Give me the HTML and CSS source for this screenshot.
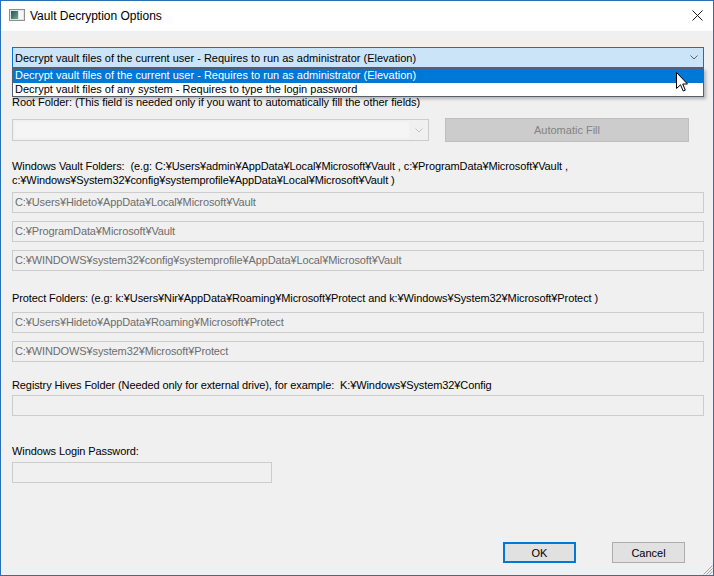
FILE: index.html
```html
<!DOCTYPE html>
<html lang="en">
<head>
  <meta charset="UTF-8">
  <title>Vault Decryption Options</title>
  <link rel="stylesheet" href="styles.css">
</head>
<body>
  <div class="window">
    <!-- Title bar -->
    <div class="titlebar">
      <svg class="app-icon" width="16" height="12" viewBox="0 0 16 12">
        <defs>
          <linearGradient id="pane" x1="0" y1="0" x2="1" y2="1">
            <stop offset="0" stop-color="#27525e"/>
            <stop offset="1" stop-color="#6da88a"/>
          </linearGradient>
        </defs>
        <rect x="0.5" y="0.5" width="15" height="11" fill="#e4e4e4" stroke="#8f8f8f"/>
        <rect x="2" y="2" width="7" height="8" fill="url(#pane)"/>
        <rect x="10" y="2" width="4" height="8" fill="#f7f7f7"/>
      </svg>
      <span class="title">Vault Decryption Options</span>
      <svg class="close" width="11" height="11" viewBox="0 0 11 11">
        <path d="M0.5 0.5 L10.5 10.5 M10.5 0.5 L0.5 10.5" stroke="#1a1a1a" stroke-width="1" fill="none"/>
      </svg>
    </div>

    <div class="client">
      <!-- Mode selector (open) -->
      <div class="combo combo-main">
        <span>Decrypt vault files of the current user - Requires to run as administrator (Elevation)</span>
        <svg width="8" height="5" viewBox="0 0 8 5"><path d="M0.5 0.5 L4 4 L7.5 0.5" stroke="#606060" fill="none"/></svg>
      </div>

      <ul class="droplist">
        <li class="selected">Decrypt vault files of the current user - Requires to run as administrator (Elevation)</li>
        <li>Decrypt vault files of any system - Requires to type the login password</li>
      </ul>

      <p class="label label-root">Root Folder: (This field is needed only if you want to automatically fill the other fields)</p>
      <div class="root-row">
        <div class="combo combo-root">
          <span class="combo-edit"></span>
          <svg width="8" height="5" viewBox="0 0 8 5"><path d="M0.5 0.5 L4 4 L7.5 0.5" stroke="#c2c2c2" fill="none"/></svg>
        </div>
        <div class="btn btn-disabled">Automatic Fill</div>
      </div>

      <p class="label label-vault">Windows Vault Folders:&nbsp; (e.g: C:¥Users¥admin¥AppData¥Local¥Microsoft¥Vault , c:¥ProgramData¥Microsoft¥Vault ,<br>c:¥Windows¥System32¥config¥systemprofile¥AppData¥Local¥Microsoft¥Vault )</p>
      <div class="field field-first">C:¥Users¥Hideto¥AppData¥Local¥Microsoft¥Vault</div>
      <div class="field">C:¥ProgramData¥Microsoft¥Vault</div>
      <div class="field">C:¥WINDOWS¥system32¥config¥systemprofile¥AppData¥Local¥Microsoft¥Vault</div>

      <p class="label label-protect">Protect Folders: (e.g: k:¥Users¥Nir¥AppData¥Roaming¥Microsoft¥Protect and k:¥Windows¥System32¥Microsoft¥Protect )</p>
      <div class="field field-protect">C:¥Users¥Hideto¥AppData¥Roaming¥Microsoft¥Protect</div>
      <div class="field">C:¥WINDOWS¥system32¥Microsoft¥Protect</div>

      <p class="label label-registry">Registry Hives Folder (Needed only for external drive), for example:&nbsp; K:¥Windows¥System32¥Config</p>
      <div class="field field-registry"></div>

      <p class="label label-password">Windows Login Password:</p>
      <div class="field field-password"></div>

      <div class="actions">
        <div class="btn btn-default">OK</div>
        <div class="btn btn-cancel">Cancel</div>
      </div>

      <!-- mouse pointer over the open list -->
      <svg class="pointer" width="13" height="20" viewBox="0 0 13 20">
        <path d="M0.5 0.5 V16.5 L4.5 12.8 L7.2 19 L9.3 18.1 L6.7 12 H11.5 Z" fill="#fff" stroke="#000" stroke-width="1" stroke-linejoin="miter"/>
      </svg>

      <svg class="grip" width="11" height="11" viewBox="0 0 11 11">
        <path d="M10.5 1.5 L1.5 10.5 M10.5 4.5 L4.5 10.5 M10.5 7.5 L7.5 10.5" stroke="#a6a6a6" fill="none"/>
      </svg>
    </div>
  </div>
</body>
</html>
```
FILE: styles.css
```css
/* Reset */
* {
  margin: 0;
  padding: 0;
  box-sizing: border-box;
}

body {
  font-family: "Liberation Sans", Arial, sans-serif;
  font-size: 11px;
  color: #000;
  background: #f0f0f0;
}

/* Window frame */
.window {
  width: 714px;
  height: 576px;
  border: 1px solid #2b6fb6;
  display: flex;
  flex-direction: column;
  background: #f0f0f0;
}

.titlebar {
  height: 30px;
  background: #fff;
  display: flex;
  align-items: center;
  padding: 0 10px 0 8px;
}

.app-icon {
  margin-top: -2px;
}

.title {
  font-size: 12px;
  margin-left: 5px;
  flex: 1;
}

.close {
  margin-top: -1px;
}

/* Client area */
.client {
  flex: 1;
  position: relative;
  padding: 16px 9px 0 11px;
}

.label {
  line-height: 14px;
  white-space: nowrap;
  letter-spacing: -0.1px;
}

/* Combo boxes */
.combo {
  display: flex;
  align-items: center;
  justify-content: space-between;
  white-space: nowrap;
}

.combo-main {
  height: 21px;
  border: 1px solid #0078d7;
  background: #cce4f7;
  padding: 0 5px 0 2px;
}

.droplist {
  list-style: none;
  position: absolute;
  left: 11px;
  top: 37px;
  width: 692px;
  border: 1px solid #56606c;
  background: #fff;
  box-shadow: 2px 2px 3px rgba(0, 0, 0, 0.25);
  z-index: 2;
}

.droplist li {
  height: 13px;
  line-height: 13px;
  padding-left: 2px;
  white-space: nowrap;
}

.droplist li.selected {
  background: #0078d7;
  color: #fff;
  height: 14px;
}

.label-root {
  margin-top: 27px;
  letter-spacing: -0.05px;
}

.root-row {
  display: flex;
  align-items: center;
  gap: 16px;
  margin-top: 9px;
  height: 24px;
}

.combo-root {
  width: 417px;
  height: 22px;
  border: 1px solid #cccccc;
  background: #f0f0f0;
  padding: 2px 5px 2px 2px;
}

.combo-edit {
  display: block;
  width: 394px;
  height: 100%;
  background: #f5f5f5;
}

/* Buttons */
.btn {
  display: flex;
  align-items: center;
  justify-content: center;
  background: #e1e1e1;
  border: 1px solid #adadad;
}

.btn-disabled {
  width: 244px;
  height: 24px;
  background: #cccccc;
  border-color: #bfbfbf;
  color: #838383;
}

/* Text fields (disabled look) */
.field {
  height: 21px;
  border: 1px solid #cccccc;
  padding-left: 2px;
  line-height: 19px;
  color: #6d6d6d;
  white-space: nowrap;
  overflow: hidden;
  letter-spacing: -0.12px;
  margin-top: 8px;
}

.label-vault { margin-top: 17px; }
.field-first { margin-top: 5px; }

.label-protect { margin-top: 20px; }
.field-protect { margin-top: 7px; }

.label-registry { margin-top: 16px; }
.field-registry { margin-top: 3px; }

.label-password { margin-top: 28px; }
.field-password {
  margin-top: 4px;
  width: 260px;
}

/* Dialog buttons */
.actions {
  display: flex;
  justify-content: flex-end;
  gap: 36px;
  margin-top: 59px;
  padding-right: 19px;
}

.actions .btn {
  width: 73px;
  height: 21px;
}

.btn-default {
  border: 2px solid #0078d7;
}

/* Overlays */
.pointer {
  position: absolute;
  left: 675px;
  top: 41px;
  z-index: 3;
}

.grip {
  position: absolute;
  right: 0;
  bottom: 0;
}
```
